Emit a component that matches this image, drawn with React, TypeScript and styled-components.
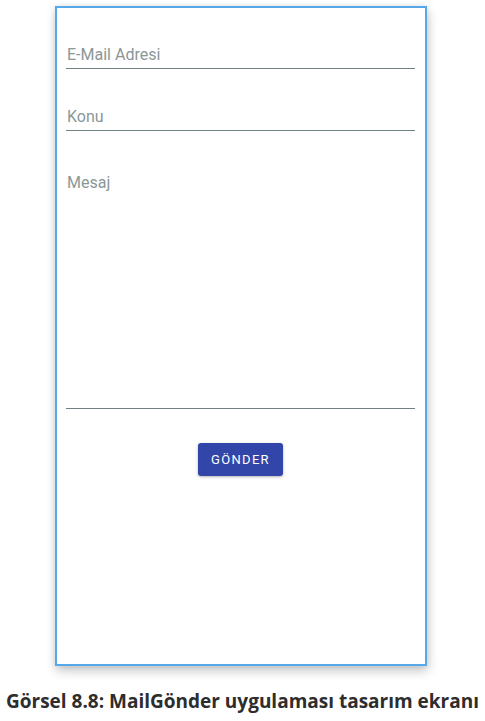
import * as React from 'react';
import styled, { createGlobalStyle } from 'styled-components';

const GlobalStyle = createGlobalStyle`
  html, body {
    margin: 0;
    padding: 0;
    background: #ffffff;
  }
`;

const Page = styled.div`
  width: 485px;
  height: 721px;
  display: flex;
  flex-direction: column;
  align-items: center;
  padding-top: 6px;
  box-sizing: border-box;
`;

const PhoneFrame = styled.div`
  width: 372px;
  height: 660px;
  margin-left: -3px;
  box-sizing: border-box;
  border: 2px solid #55a8ea;
  background: #ffffff;
  box-shadow: 1px 5px 10px rgba(0, 0, 0, 0.22), 0 0 6px rgba(0, 0, 0, 0.08);
  padding: 12px 10px 0 9px;
  display: flex;
  flex-direction: column;
`;

interface FieldProps {
  tall?: boolean
}

const Field = styled.div<FieldProps>`
  margin-bottom: 13px;
  border-bottom: 1px solid #6f8183;
  display: flex;
  align-items: ${(props) => (props.tall ? 'flex-start' : 'flex-end')};
  padding: ${(props) => (props.tall ? '29px 0 0 1px' : '0 0 4px 1px')};
  box-sizing: content-box;
  height: ${(props) => (props.tall ? '235px' : '44px')};
`;

const Hint = styled.span`
  font-family: Roboto, "Noto Sans", sans-serif;
  font-size: 16px;
  line-height: 19px;
  color: #8a9797;
`;

const ButtonRow = styled.div`
  display: flex;
  justify-content: center;
  padding-top: 21px;
`;

const SendButton = styled.button`
  width: 85px;
  height: 33px;
  border: none;
  border-radius: 3px;
  background: #3246a9;
  color: #ffffff;
  font-family: Roboto, "Noto Sans", sans-serif;
  font-weight: 400;
  font-size: 13px;
  letter-spacing: 1.3px;
  box-shadow: 0 1px 3px rgba(0, 0, 0, 0.3);
  padding: 0;
  cursor: pointer;
`;

const Caption = styled.div`
  margin-top: 23px;
  font-family: "Open Sans", "DejaVu Sans", sans-serif;
  font-weight: 700;
  font-size: 19px;
  line-height: 24px;
  color: #2d2d2d;
  white-space: nowrap;
`;

function App() {
  return (
    <Page>
      <GlobalStyle />
      <PhoneFrame>
        <Field>
          <Hint>E-Mail Adresi</Hint>
        </Field>
        <Field>
          <Hint>Konu</Hint>
        </Field>
        <Field tall>
          <Hint>Mesaj</Hint>
        </Field>
        <ButtonRow>
          <SendButton>GÖNDER</SendButton>
        </ButtonRow>
      </PhoneFrame>
      <Caption>Görsel 8.8: MailGönder uygulaması tasarım ekranı</Caption>
    </Page>
  );
}

export default App;
